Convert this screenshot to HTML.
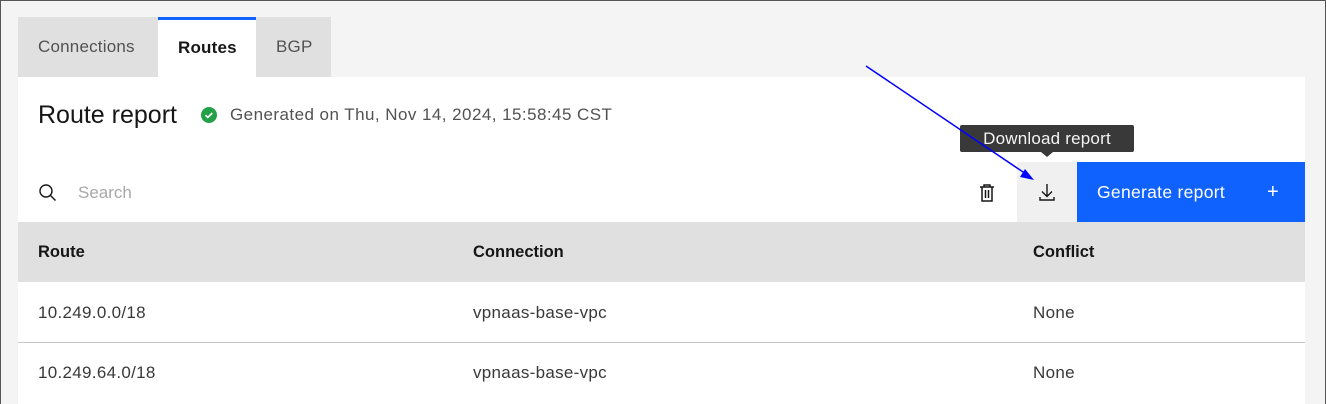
<!DOCTYPE html>
<html><head><style>
*{margin:0;padding:0;box-sizing:border-box}
body{width:1326px;height:404px;overflow:hidden;background:#f4f4f4;font-family:"Liberation Sans",sans-serif;position:relative}
.frame{position:absolute;inset:0;border:1px solid #555;border-bottom:none;}
.abs{position:absolute}
.tab{position:absolute;top:17px;height:60px;font-size:17px;line-height:60px;padding-left:20px;color:#525252;background:#e0e0e0;letter-spacing:0.2px}
.t{position:absolute;font-size:17px;color:#393939;letter-spacing:0.3px}
.h{position:absolute;font-size:16.5px;font-weight:bold;color:#161616}
</style></head><body>
<div class="tab" style="left:18px;width:140px">Connections</div>
<div class="tab" style="left:158px;width:98px;background:#fff;color:#161616;font-weight:bold;border-top:3px solid #0f62fe;line-height:56px">Routes</div>
<div class="tab" style="left:256px;width:75px">BGP</div>
<div class="abs" style="left:18px;top:77px;width:1287px;height:327px;background:#fff"></div>
<div class="abs" style="left:38px;top:101px;font-size:25px;color:#161616">Route report</div>
<svg class="abs" style="left:200px;top:106px" width="18" height="18" viewBox="0 0 18 18"><circle cx="9" cy="9" r="8" fill="#24a148"/><path d="M5.5 9.2l2.3 2.3 4.5-4.5" stroke="#fff" stroke-width="1.6" fill="none"/></svg>
<div class="abs" style="left:230px;top:105px;font-size:17px;color:#525252;letter-spacing:0.45px">Generated on Thu, Nov 14, 2024, 15:58:45 CST</div>
<svg class="abs" style="left:38px;top:183px" width="20" height="20" viewBox="0 0 20 20"><circle cx="8" cy="8" r="6" stroke="#161616" stroke-width="1.4" fill="none"/><path d="M12.5 12.5l5 5" stroke="#161616" stroke-width="1.4"/></svg>
<div class="abs" style="left:78px;top:183px;font-size:17px;color:#a8a8a8">Search</div>
<svg class="abs" style="left:978px;top:183px" width="18" height="20" viewBox="0 0 18 20"><path d="M2 4h14M6 4V2h6v2M4 4v14h10V4M7.5 7v8M10.5 7v8" stroke="#161616" stroke-width="1.5" fill="none"/></svg>
<div class="abs" style="left:1017px;top:162px;width:60px;height:60px;background:#f0f0f0"></div>
<svg class="abs" style="left:1037px;top:182px" width="20" height="20" viewBox="0 0 20 20"><path d="M10 2v12M5 9.5l5 5 5-5M3 15v3h14v-3" stroke="#161616" stroke-width="1.4" fill="none"/></svg>
<div class="abs" style="left:1077px;top:162px;width:228px;height:60px;background:#0f62fe;color:#fff;font-size:17.5px;line-height:60px;padding-left:20px;letter-spacing:0.3px">Generate report<span style="position:absolute;left:190px;font-size:20px">+</span></div>
<div class="abs" style="left:960px;top:125px;width:174px;height:27px;background:#393939;border-radius:2px;color:#f4f4f4;font-size:17px;line-height:28px;text-align:center;letter-spacing:0.2px">Download report</div>
<div class="abs" style="left:1041px;top:152px;width:0;height:0;border-left:6px solid transparent;border-right:6px solid transparent;border-top:5px solid #393939"></div>
<div class="abs" style="left:18px;top:222px;width:1287px;height:60px;background:#e0e0e0"></div>
<div class="h" style="left:38px;top:243px">Route</div>
<div class="h" style="left:473px;top:243px">Connection</div>
<div class="h" style="left:1033px;top:243px">Conflict</div>
<div class="t" style="left:38px;top:303px">10.249.0.0/18</div>
<div class="t" style="left:473px;top:303px">vpnaas-base-vpc</div>
<div class="t" style="left:1033px;top:303px">None</div>
<div class="abs" style="left:18px;top:342px;width:1287px;height:1px;background:#c6c6c6"></div>
<div class="t" style="left:38px;top:363px">10.249.64.0/18</div>
<div class="t" style="left:473px;top:363px">vpnaas-base-vpc</div>
<div class="t" style="left:1033px;top:363px">None</div>
<svg class="abs" style="left:0;top:0" width="1326" height="404"><line x1="866" y1="66" x2="1026" y2="174" stroke="#0000ff" stroke-width="1.5"/><path d="M1034 180l-14-3 5-8z" fill="#0000ff"/></svg>
<div class="frame"></div>
</body></html>
